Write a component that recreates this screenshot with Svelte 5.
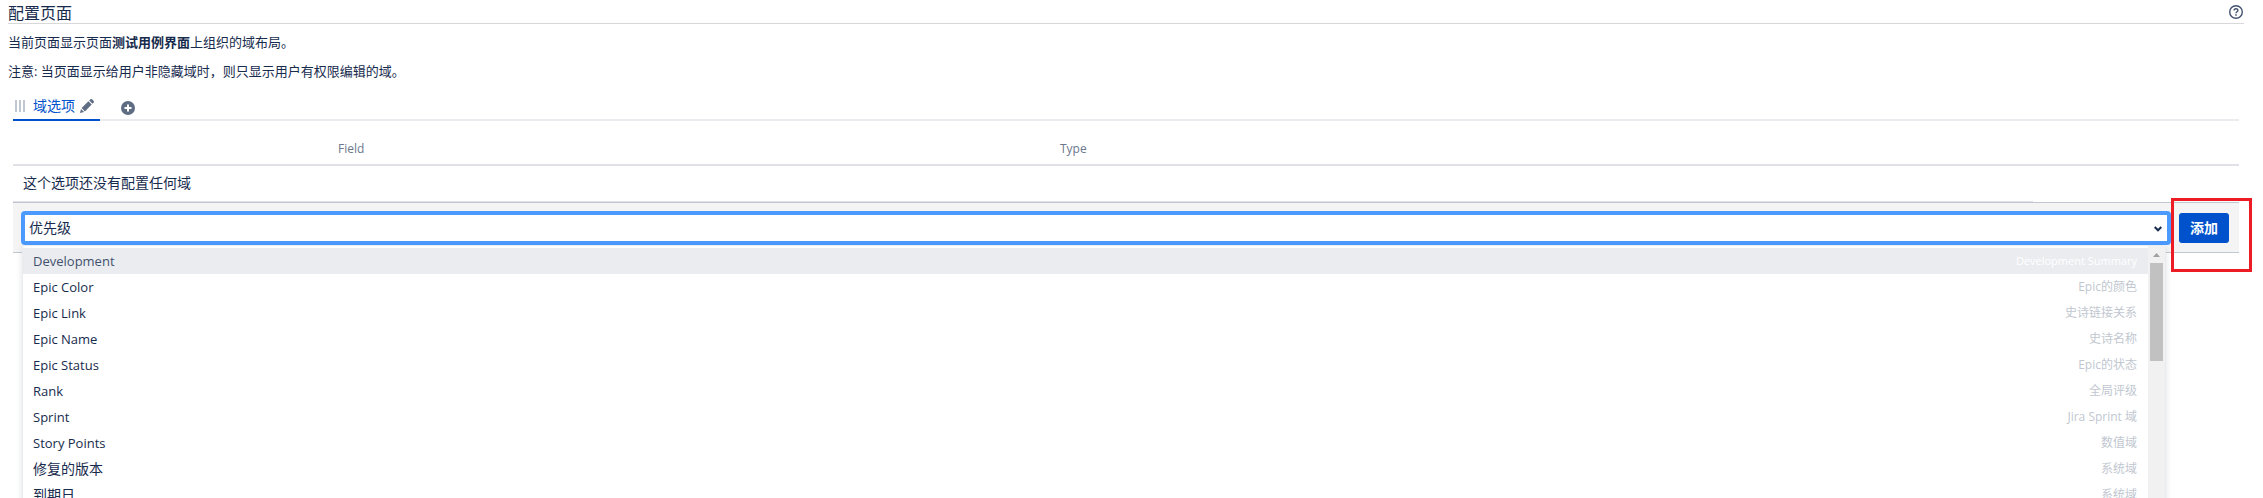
<script>
  const fields = [
    { name: 'Development', type: 'Development Summary' },
    { name: 'Epic Color', type: 'Epic的颜色' },
    { name: 'Epic Link', type: '史诗链接关系' },
    { name: 'Epic Name', type: '史诗名称' },
    { name: 'Epic Status', type: 'Epic的状态' },
    { name: 'Rank', type: '全局评级' },
    { name: 'Sprint', type: 'Jira Sprint 域' },
    { name: 'Story Points', type: '数值域' },
    { name: '修复的版本', type: '系统域' },
    { name: '到期日', type: '系统域' }
  ];
  let active = $state(0);
  const isLatin = (text) => /^[\x20-\x7e]+$/.test(text);
</script>

<main class="page">
  <header class="title-bar">
    <h1>配置页面</h1>
    <button class="icon-button" aria-label="帮助">
      <svg width="16" height="16" viewBox="0 0 16 16" fill="none" stroke="#42526e">
        <circle cx="8" cy="8" r="6.3" stroke-width="1.4" />
        <path d="M6.1 6.5C6.1 4.2 9.9 4.2 9.9 6.4C9.9 7.7 8 7.8 8 9.3" stroke-width="1.4" />
        <path d="M8 10.3V11.7" stroke-width="1.5" />
      </svg>
    </button>
  </header>

  <p>当前页面显示页面<strong>测试用例界面</strong>上组织的域布局。</p>
  <p>注意: 当页面显示给用户非隐藏域时，则只显示用户有权限编辑的域。</p>

  <div class="content">
    <nav class="tabs">
      <div class="tab">
        <span class="grip"></span>
        <a href="#fields">域选项</a>
        <button class="icon-button" aria-label="编辑">
          <svg width="16" height="16" viewBox="0 0 16 16" fill="#5e6c84">
            <path d="M1 15L2 10.9L5.1 14Z" />
            <path d="M2.6 10.1L9.4 3.3L12.7 6.6L5.9 13.4Z" />
            <path d="M10.2 2.5L11.4 1.3Q12.2 .6 13 1.3L14.7 3Q15.4 3.8 14.7 4.6L13.5 5.8Z" />
          </svg>
        </button>
      </div>
      <button class="icon-button add-tab" aria-label="添加选项">
        <svg width="16" height="16" viewBox="0 0 16 16">
          <circle cx="8" cy="8" r="7" fill="#5e6c84" />
          <path d="M8 4.5V11.5M4.5 8H11.5" stroke="#fff" stroke-width="2" />
        </svg>
      </button>
    </nav>

    <table>
      <thead>
        <tr><th class="handle"></th><th class="field">Field</th><th>Type</th><th class="actions"></th></tr>
      </thead>
      <tbody>
        <tr><td colspan="3">这个选项还没有配置任何域</td></tr>
      </tbody>
    </table>

    <form class="add-row" onsubmit={(e) => e.preventDefault()}>
      <div class="picker">
        <select aria-label="域">
          <option>优先级</option>
        </select>
        <svg class="chevron" width="8" height="6" viewBox="0 0 8 6" fill="none" stroke="#172b4d" stroke-width="2">
          <path d="M.7 1L4 4.3L7.3 1" />
        </svg>
        <div class="menu">
          <ul role="listbox" aria-label="域">
            {#each fields as field, i}
              <li role="option" aria-selected={i === active} class:active={i === active} onmouseenter={() => (active = i)}>
                <span class="name" class:latin={isLatin(field.name)}>{field.name}</span>
                <span class="type" class:latin={isLatin(field.type)}>{field.type}</span>
              </li>
            {/each}
          </ul>
          <div class="track">
            <svg width="17" height="17" viewBox="0 0 17 17" fill="#a0a0a0"><path d="M5 11L8.5 7L12 11Z" /></svg>
            <div class="thumb"></div>
          </div>
        </div>
      </div>
      <div class="action">
        <button class="primary">添加</button>
        <span class="highlight"></span>
      </div>
    </form>
  </div>
</main>

<style>
  :global(body) {
    background: #fff;
  }
  .page {
    box-sizing: border-box;
    height: 100vh;
    overflow: hidden;
    padding: 0 19px 0 8px;
    color: #172b4d;
    font: 14px/20px "Open Sans", "Noto Sans CJK SC", sans-serif;
  }
  .title-bar {
    display: flex;
    justify-content: space-between;
    align-items: center;
    height: 23px;
    border-bottom: 1px solid #d8d8d8;
  }
  h1 {
    margin: 3px 0 0;
    font-size: 16px;
    font-weight: 400;
    line-height: 20px;
  }
  p {
    margin: 9px 0 0;
    font-size: 13px;
    line-height: 20px;
  }
  .title-bar + p {
    margin-top: 8px;
  }
  .icon-button {
    display: flex;
    padding: 0;
    border: 0;
    background: none;
  }
  .content {
    margin: 13px 5px 0;
  }
  .tabs {
    display: flex;
    height: 25px;
    border-bottom: 2px solid #ebecf0;
  }
  .tab {
    display: flex;
    align-items: center;
    box-sizing: border-box;
    height: 27px;
    padding: 0 5px 2px 2px;
    border-bottom: 2px solid #0052cc;
  }
  .tab a {
    margin: 0 4px 0 8px;
    color: #0052cc;
    text-decoration: none;
  }
  .grip {
    width: 10px;
    height: 12px;
    background: repeating-linear-gradient(90deg, #c1c7d0 0 2px, transparent 2px 4px);
  }
  .add-tab {
    align-self: center;
    margin: 2px 0 0 20px;
  }
  table {
    width: 100%;
    border-collapse: collapse;
    table-layout: fixed;
  }
  th {
    height: 44px;
    padding: 12px 0 0;
    box-sizing: border-box;
    border-bottom: 2px solid #dfe1e6;
    color: #6b778c;
    font-size: 12px;
    font-weight: 500;
    line-height: 20px;
    text-align: left;
  }
  .handle {
    width: 325px;
  }
  .field {
    width: 722px;
  }
  .actions {
    width: 206px;
  }
  td {
    padding: 7px 10px 8px;
    border-bottom: 1px solid #dfe1e6;
  }
  .add-row {
    display: flex;
    align-items: center;
    gap: 8px;
    padding: 8px 10px 7px 8px;
    border: solid #c1c7d0;
    border-width: 1px 0;
    background: #f4f4f4;
  }
  .picker {
    position: relative;
    flex: 1;
  }
  select {
    display: block;
    width: 100%;
    height: 34px;
    padding: 0 4px;
    border: 4px solid #4c9aff;
    border-radius: 4px;
    background: #fff;
    color: inherit;
    font: inherit;
    appearance: none;
  }
  .chevron {
    position: absolute;
    top: 15px;
    right: 9px;
  }
  .menu {
    position: absolute;
    top: 34px;
    left: 1px;
    right: 5px;
    display: flex;
    border: 1px solid #ebecf0;
    border-radius: 3px;
    background: #fff;
    box-shadow: 0 3px 6px rgba(9, 30, 66, 0.13);
  }
  ul {
    flex: 1;
    margin: 0;
    padding: 2px 0 3px;
    list-style: none;
  }
  li {
    display: flex;
    justify-content: space-between;
    padding: 3px 11px 3px 10px;
  }
  .active {
    background: #ebecf0;
    color: #42526e;
  }
  .name.latin {
    font-size: 13px;
  }
  .type {
    color: #c1c7d0;
    font-size: 12px;
  }
  .type.latin {
    font-size: 11px;
  }
  .active .type {
    color: #fff;
  }
  .track {
    width: 17px;
    background: #f1f1f1;
  }
  .track svg {
    display: block;
  }
  .thumb {
    height: 98px;
    margin: 0 2px;
    background: #c1c1c1;
  }
  .action {
    position: relative;
  }
  .primary {
    display: block;
    height: 30px;
    padding: 0 11px;
    border: 0;
    border-radius: 3px;
    background: #0052cc;
    color: #fff;
    font: 700 14px/20px "Open Sans", "Noto Sans CJK SC", sans-serif;
  }
  .highlight {
    position: absolute;
    inset: -15px -23px -29px -8px;
    border: 3px solid #ed1c24;
    pointer-events: none;
  }
</style>
